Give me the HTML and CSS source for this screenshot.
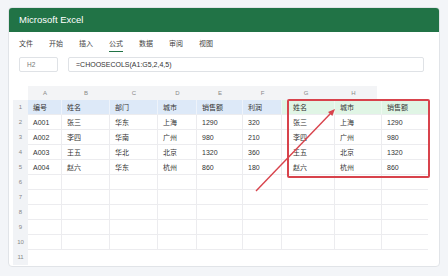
FILE: index.html
```html
<!DOCTYPE html>
<html lang="zh-CN">
<head>
    <meta charset="UTF-8">
    <meta name="viewport" content="width=device-width, initial-scale=1.0">
    <title>Microsoft Excel</title>
    <link rel="stylesheet" href="styles.css">
</head>
<body>
    <div class="window">
        <div class="titlebar">Microsoft Excel</div>

        <div class="menu">
            <span class="tab">文件</span>
            <span class="tab">开始</span>
            <span class="tab">插入</span>
            <span class="tab active">公式</span>
            <span class="tab">数据</span>
            <span class="tab">审阅</span>
            <span class="tab">视图</span>
        </div>

        <div class="formula-row">
            <div class="name-box">H2</div>
            <div class="formula-box">=CHOOSECOLS(A1:G5,2,4,5)</div>
        </div>

        <div class="sheet">
            <div class="col-heads">
                <span></span><span>A</span><span>B</span><span>C</span><span>D</span>
                <span>E</span><span>F</span><span>G</span><span>H</span>
            </div>

            <div class="grid">
                <div class="rn">1</div>
                <div class="c hd">编号</div><div class="c hd">姓名</div><div class="c hd">部门</div>
                <div class="c hd">城市</div><div class="c hd">销售额</div><div class="c hd">利润</div>
                <div class="c gr sp">姓名</div><div class="c gr">城市</div><div class="c gr last">销售额</div>

                <div class="rn">2</div>
                <div class="c">A001</div><div class="c">张三</div><div class="c">华东</div>
                <div class="c">上海</div><div class="c">1290</div><div class="c">320</div>
                <div class="c sp">张三</div><div class="c">上海</div><div class="c last">1290</div>

                <div class="rn">3</div>
                <div class="c">A002</div><div class="c">李四</div><div class="c">华南</div>
                <div class="c">广州</div><div class="c">980</div><div class="c">210</div>
                <div class="c sp">李四</div><div class="c">广州</div><div class="c last">980</div>

                <div class="rn">4</div>
                <div class="c">A003</div><div class="c">王五</div><div class="c">华北</div>
                <div class="c">北京</div><div class="c">1320</div><div class="c">360</div>
                <div class="c sp">王五</div><div class="c">北京</div><div class="c last">1320</div>

                <div class="rn">5</div>
                <div class="c">A004</div><div class="c">赵六</div><div class="c">华东</div>
                <div class="c">杭州</div><div class="c">860</div><div class="c">180</div>
                <div class="c sp">赵六</div><div class="c">杭州</div><div class="c last">860</div>

                <div class="rn">6</div>
                <div class="c"></div><div class="c"></div><div class="c"></div><div class="c"></div><div class="c"></div>
                <div class="c"></div><div class="c"></div><div class="c"></div><div class="c last"></div>

                <div class="rn">7</div>
                <div class="c"></div><div class="c"></div><div class="c"></div><div class="c"></div><div class="c"></div>
                <div class="c"></div><div class="c"></div><div class="c"></div><div class="c last"></div>

                <div class="rn">8</div>
                <div class="c"></div><div class="c"></div><div class="c"></div><div class="c"></div><div class="c"></div>
                <div class="c"></div><div class="c"></div><div class="c"></div><div class="c last"></div>

                <div class="rn">9</div>
                <div class="c"></div><div class="c"></div><div class="c"></div><div class="c"></div><div class="c"></div>
                <div class="c"></div><div class="c"></div><div class="c"></div><div class="c last"></div>

                <div class="rn">10</div>
                <div class="c"></div><div class="c"></div><div class="c"></div><div class="c"></div><div class="c"></div>
                <div class="c"></div><div class="c"></div><div class="c"></div><div class="c last"></div>

                <div class="rn">11</div>
                <div class="c blank"></div><div class="c blank"></div><div class="c blank"></div><div class="c blank"></div><div class="c blank"></div>
                <div class="c blank"></div><div class="c blank"></div><div class="c blank"></div><div class="c blank last"></div>
            </div>

            <!-- spill result highlight + arrow -->
            <div class="spill-box"></div>
            <svg class="arrow" width="420" height="180" viewBox="0 0 420 180">
                <line x1="243" y1="105" x2="318" y2="27" stroke="#d8434c" stroke-width="1.4"/>
                <polygon points="322,23 319.3,30.1 315,26" fill="#d8434c"/>
            </svg>
        </div>
    </div>
</body>
</html>
```

FILE: styles.css
```css
body {
    margin: 0;
    background: #f3f5f8;
    font-family: "Liberation Sans", "Noto Sans CJK SC", sans-serif;
    color: #333;
}
.window {
    position: relative;
    box-sizing: border-box;
    width: 432px;
    height: 260px;
    margin: 7px 8px 0;
    background: #fff;
    border: 1px solid #e1e4e8;
    border-radius: 4px;
    overflow: hidden;
}
.titlebar {
    height: 24px;
    line-height: 24px;
    padding-left: 10px;
    background: #217346;
    color: #fff;
    font-size: 9.5px;
}
.menu {
    display: flex;
    gap: 16px;
    padding: 7px 10px 0;
    height: 13px;
    font-size: 7px;
    line-height: 10px;
    color: #444;
}
.tab {
    padding-bottom: 1px;
}
.tab.active {
    border-bottom: 1.5px solid #217346;
}
.formula-row {
    display: flex;
    gap: 10px;
    padding: 0 10px;
    margin-top: 5px;
}
.name-box,
.formula-box {
    box-sizing: border-box;
    height: 15px;
    line-height: 13px;
    border: 1px solid #dfe2e6;
    border-radius: 2px;
    font-size: 7px;
}
.name-box {
    width: 39px;
    padding-left: 7px;
    color: #777;
    font-size: 6.5px;
}
.formula-box {
    width: 356px;
    padding-left: 7px;
    color: #333;
}
.sheet {
    position: relative;
    margin: 14px 0 0 4px;
}
.col-heads {
    display: grid;
    grid-template-columns: 15px 34px 48px 48px 39px 46px 39px 48px 47px;
    height: 14px;
    line-height: 14px;
    font-size: 6px;
    color: #888;
    text-align: center;
}
.col-heads span {
    background: #f3f4f6;
}
.col-heads span:first-child {
    background: none;
}
.grid {
    display: grid;
    grid-template-columns: 15px 34px 48px 48px 39px 46px 39px 53px 47px 46px;
    grid-auto-rows: 15px;
    font-size: 7px;
    line-height: 15px;
}
.rn {
    background: #f1f3f6;
    color: #888;
    font-size: 6px;
    text-align: center;
}
.c {
    box-sizing: border-box;
    padding-left: 5px;
    border-right: 1px solid #ececef;
    border-bottom: 1px solid #ececef;
    white-space: nowrap;
}
.c.last {
    border-right: none;
}
.c.blank {
    border: none;
}
.c.sp {
    padding-left: 11px;
}
.hd {
    background: #dde9f8;
    border-right-color: #eef3fa;
}
.gr {
    background: #e0f5e5;
    border-right-color: #eef8f0;
}
.spill-box {
    position: absolute;
    left: 274px;
    top: 13px;
    box-sizing: border-box;
    width: 143px;
    height: 79px;
    border: 2px solid #d8434c;
    border-radius: 2px;
}
.arrow {
    position: absolute;
    left: 0;
    top: 0;
    pointer-events: none;
}
```
